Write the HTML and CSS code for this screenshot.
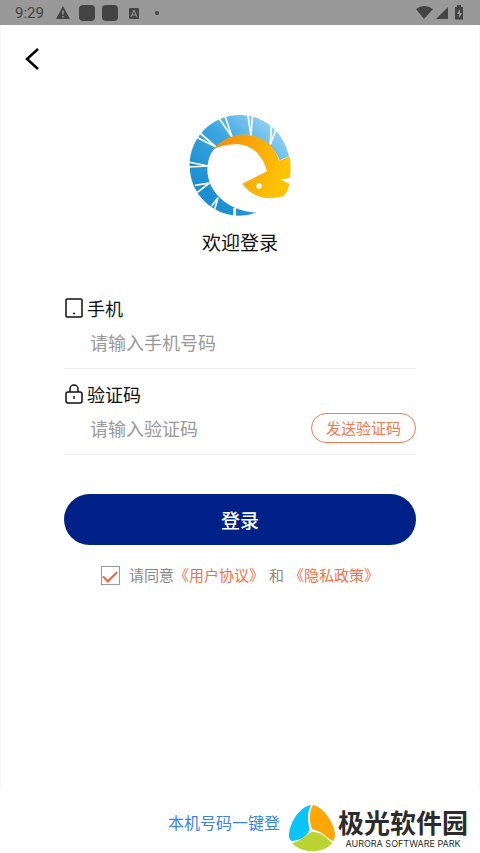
FILE: index.html
```html
<!DOCTYPE html>
<html lang="zh-CN">
<head>
  <meta charset="UTF-8">
  <meta name="viewport" content="width=device-width, initial-scale=1.0">
  <title>欢迎登录</title>
  <link rel="stylesheet" href="styles.css">
</head>
<body>

<div class="status-bar">
  <span class="time">9:29</span>
  <svg class="status-left" width="106" height="16" viewBox="0 0 106 16" fill="#444">
    <path d="M7 1 L14 14 H0 Z"/>
    <path d="M7 5.500v4M7 11v1.500" stroke="#999" stroke-width="1.500"/>
    <rect x="23" y="0" width="16" height="16" rx="4"/>
    <rect x="46" y="0" width="16" height="16" rx="4"/>
    <rect x="73" y="3" width="10" height="11" rx="1"/>
    <path d="M75 12l3-7 3 7M76 10h4" fill="none" stroke="#999"/>
    <circle cx="101" cy="8" r="2"/>
  </svg>
  <svg class="status-right" width="50" height="16" viewBox="0 0 50 16" fill="#444">
    <path d="M1 4Q9-2 18 4L9 14Z"/>
    <path d="M33 2v12H21Z"/>
    <path d="M42 2V0h4v2h2v12.500h-8V2Z"/>
    <path d="M45 4l-3 5h2v4l3-5h-2Z" fill="#999"/>
  </svg>
</div>

<main class="login-page">
  <button class="back-btn" type="button" aria-label="返回">
    <svg width="16" height="24" viewBox="0 0 16 24" fill="none" stroke="#000" stroke-width="2.500">
      <path d="M14 2L3 12l11 10"/>
    </svg>
  </button>

  <div class="brand">
    <svg class="logo" width="120" height="120" viewBox="0 0 360 360">
      <defs>
        <linearGradient id="blue" x1="0" y1="1" x2="1" y2="0">
          <stop offset="0.200" stop-color="#1b8fd2"/>
          <stop offset="0.550" stop-color="#3aa6df"/>
          <stop offset="0.900" stop-color="#9ad4f5"/>
        </linearGradient>
        <linearGradient id="orange" x1="0" y1="0" x2="1" y2="0.300">
          <stop offset="0" stop-color="#f28a0c"/>
          <stop offset="1" stop-color="#fdc305"/>
        </linearGradient>
      </defs>
      <path fill="url(#blue)" d="M327 154C312 82 252 30 180 30C95 30 29 98 29 182C29 266 97 332 180 332Q205 332 229 323C145 319 82 262 82 193Q83 153 103 132Q180 60 255 110Q288 135 299 166Z"/>
      <g fill="none" stroke="#fff" stroke-width="5">
        <path d="M203 26L213 92L218 26"/>
        <path d="M117 40L156 96L134 30"/>
        <path d="M274 62L271 118L289 70"/>
        <path d="M50 97L108 126L60 84"/>
        <path d="M25 171L84 183L25 186"/>
        <path d="M45 241L88 234L52 262"/>
        <path d="M94 304L114 278L104 312"/>
        <path d="M164 338V309" stroke-width="8"/>
      </g>
      <path fill="url(#orange)" d="M100 133C130 99 165 87 198 89C248 92 286 124 298 168L329 154Q334 185 330 218L301 224L329 236Q324 257 312 273Q287 281 258 279Q214 273 187 236L261 199C248 143 207 116 164 118Q128 119 100 133Z"/>
      <circle cx="237" cy="243" r="8" fill="#fff"/>
    </svg>
    <h1>欢迎登录</h1>
  </div>

  <form class="login-form">
    <div class="field">
      <label for="phone">
        <svg width="20" height="20" viewBox="0 0 20 20" fill="none" stroke="#111" stroke-width="1.500">
          <rect x="2" y="1" width="16" height="18" rx="1"/>
          <path d="M9 15.500h2"/>
        </svg>
        手机
      </label>
      <div class="input-row">
        <input type="tel" id="phone" placeholder="请输入手机号码">
      </div>
    </div>

    <div class="field">
      <label for="code">
        <svg width="20" height="20" viewBox="0 0 20 20" fill="none" stroke="#111" stroke-width="1.500">
          <rect x="2" y="8" width="16" height="11" rx="2"/>
          <path d="M6 8V5a4 4 0 0 1 8 0v3M10 12v3"/>
        </svg>
        验证码
      </label>
      <div class="input-row">
        <input type="text" id="code" placeholder="请输入验证码">
        <button class="code-btn" type="button">发送验证码</button>
      </div>
    </div>

    <button class="login-btn" type="submit">登录</button>

    <div class="agree">
      <input type="checkbox" id="agree" checked>
      <label for="agree">请同意</label>
      <a href="#">《用户协议》</a>
      <span>和</span>
      <a href="#">《隐私政策》</a>
    </div>
  </form>
</main>

<footer>
  <a class="quick-login" href="#">本机号码一键登</a>
  <div class="park">
    <svg width="48" height="48" viewBox="0 0 48 48">
      <path fill="#08c4f7" d="M23 1C12 3 2 17 1 31Q1 36 4 37C13 36 20 32 21 26C22 20 17 14 23 1Z"/>
      <path fill="#ffa604" d="M25 1C35 3 45 17 47 29Q47 35 45 37C37 33 34 27 24 25C22 19 20 10 25 1Z"/>
      <path fill="#b9d432" d="M4 39C13 38 17 30 24 28C31 27 38 33 44 39C36 50 14 50 4 39Z"/>
    </svg>
    <div class="park-text">
      <strong>极光软件园</strong>
      <small>AURORA SOFTWARE PARK</small>
    </div>
  </div>
</footer>

</body>
</html>
```
FILE: styles.css
```css
* {
  box-sizing: border-box;
}

body {
  margin: 0;
  font-family: "Noto Sans CJK SC", sans-serif;
  background: #fff;
  color: #111;
  min-height: 100vh;
  display: flex;
  flex-direction: column;
}

button,
input {
  font-family: inherit;
}

a {
  text-decoration: none;
}

svg {
  display: block;
  flex-shrink: 0;
}

/* Status bar */
.status-bar {
  display: flex;
  align-items: center;
  height: 25px;
  padding: 0 15px;
  background: #999;
}

.time {
  font-family: Roboto, sans-serif;
  font-size: 15px;
  color: #444;
}

.status-left {
  margin-left: 12px;
}

.status-right {
  margin-left: auto;
}

/* Login page */
.login-page {
  flex: 1;
  border: 1px solid #f8f8f8;
  border-width: 0 1px;
}

.back-btn {
  display: block;
  margin: 22px 0 0 23px;
  padding: 0;
  border: none;
  background: none;
}

.brand {
  display: flex;
  flex-direction: column;
  align-items: center;
  margin-top: 34px;
}

h1 {
  margin: 3px 0 0;
  font-size: 19px;
  font-weight: 400;
  line-height: 28px;
}

/* Form */
.login-form {
  margin: 27px 63px 0;
}

.field {
  height: 86px;
  padding-top: 11px;
  border-bottom: 1px solid #eee;
}

.field label {
  display: flex;
  align-items: center;
  gap: 3px;
  font-size: 18px;
  line-height: 28px;
}

.input-row {
  display: flex;
  align-items: center;
  height: 40px;
  padding-left: 26px;
}

.input-row input {
  flex: 1;
  min-width: 0;
  padding: 0;
  border: none;
  outline: none;
  background: none;
  font-size: 18px;
}

.input-row input::placeholder {
  color: #999;
}

.code-btn {
  height: 30px;
  padding: 0 14px;
  border: 1px solid #f4794f;
  border-radius: 15px;
  background: #fff;
  color: #f4794f;
  font-size: 15px;
  line-height: 20px;
}

.login-btn {
  width: 100%;
  height: 51px;
  margin-top: 39px;
  border: none;
  border-radius: 26px;
  background: #002288;
  color: #fff;
  font-size: 19px;
  font-weight: 500;
}

/* Agreement */
.agree {
  display: flex;
  justify-content: center;
  align-items: center;
  margin-top: 18px;
  font-size: 15px;
  line-height: 24px;
  color: #888;
}

.agree input {
  appearance: none;
  display: flex;
  justify-content: center;
  width: 19px;
  height: 19px;
  margin: 0 9px 0 0;
  border: 1px solid #999;
}

.agree input:checked::after {
  content: "";
  width: 12px;
  height: 6px;
  margin-top: 4px;
  border: solid #f4623a;
  border-width: 0 0 2px 2px;
  transform: rotate(-45deg);
}

.agree a {
  color: #f4704a;
}

.agree span {
  margin: 0 5px;
}

/* Footer */
footer {
  display: flex;
  justify-content: flex-end;
  align-items: center;
  gap: 8px;
  height: 65px;
  padding: 14px 10px 0 0;
}

.quick-login {
  margin-bottom: 12px;
  color: #3b82f0;
  font-size: 16px;
}

.park {
  display: flex;
  align-items: center;
}

.park-text {
  display: flex;
  flex-direction: column;
  align-items: center;
  width: 134px;
  color: #2b2b2b;
}

.park-text strong {
  font-size: 26px;
  font-weight: 700;
  line-height: 32px;
}

.park-text small {
  margin-top: 1px;
  font-family: Inter, sans-serif;
  font-size: 9px;
  line-height: 10px;
}
```
